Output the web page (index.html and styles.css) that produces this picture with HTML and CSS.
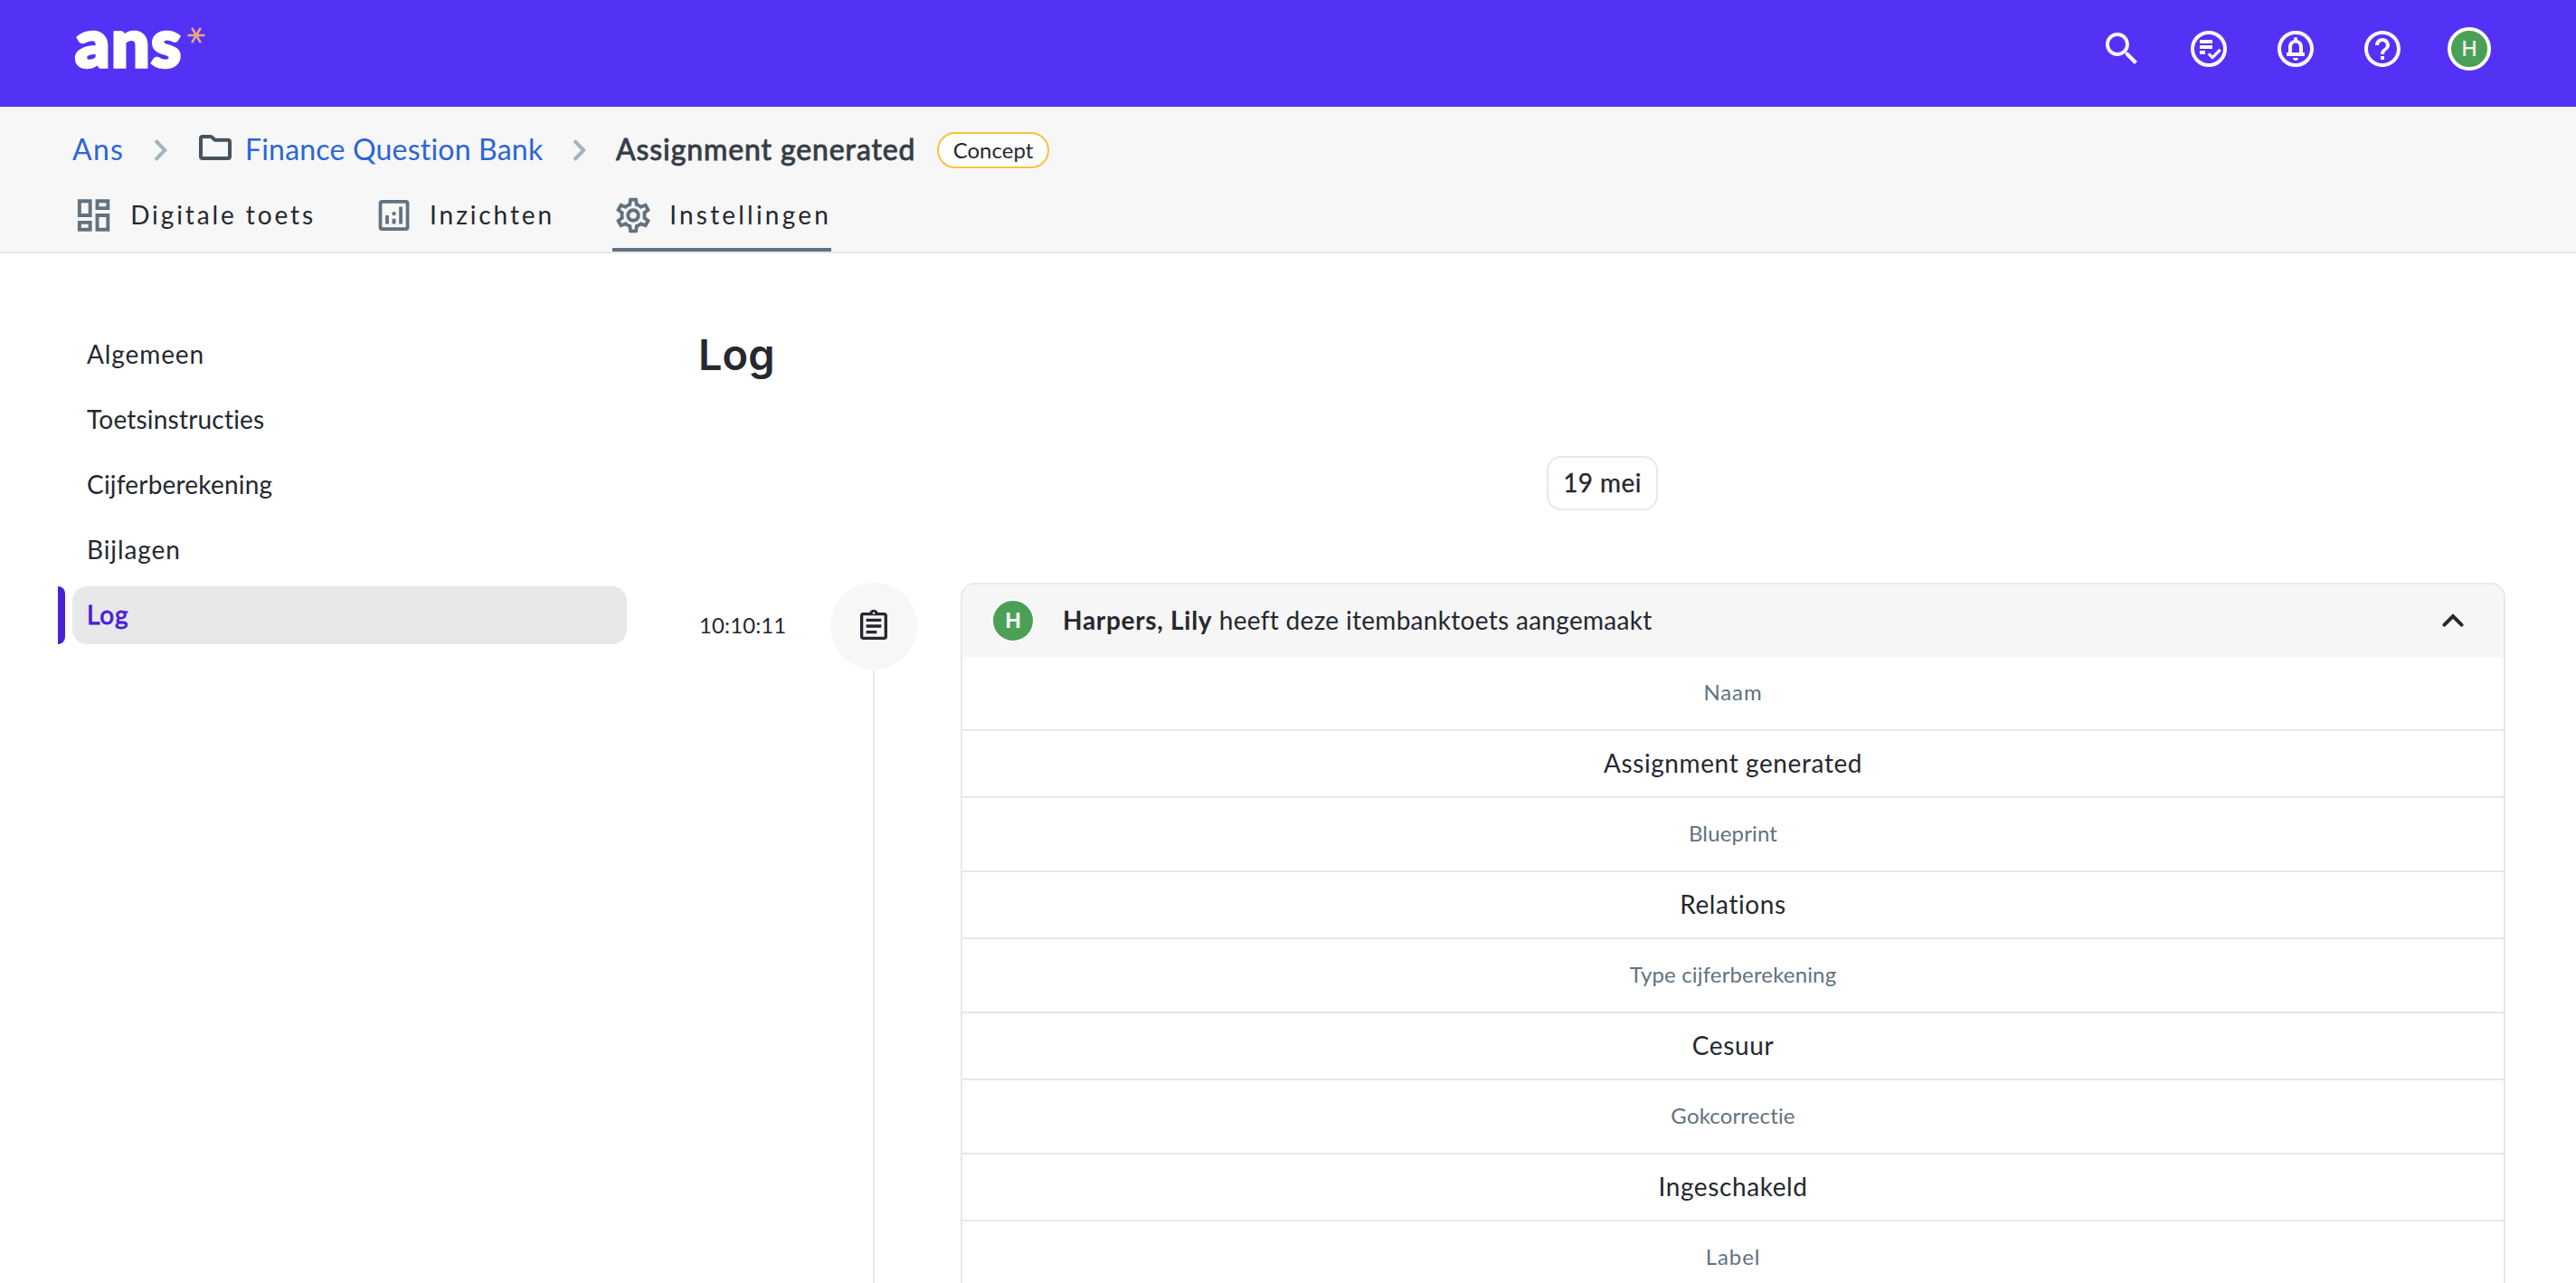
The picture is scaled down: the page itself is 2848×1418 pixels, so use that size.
FILE: index.html
```html
<!DOCTYPE html>
<html lang="nl">
<head>
    <meta charset="UTF-8">
    <meta name="viewport" content="width=device-width, initial-scale=1.0">
    <title>Log - Assignment generated</title>
    <link rel="stylesheet" href="styles.css">
</head>
<body>
    <header class="topbar">
        <a class="logo">
            <span class="logo-text">ans</span>
            <svg class="logo-star" viewBox="0 0 20 20"><path d="M.5 10h19M5.2 1.8l9.6 16.4M14.8 1.8L5.2 18.2"/></svg>
        </a>
        <div class="topbar-icons">
            <svg class="icon" viewBox="0 0 24 24"><path d="M15.5 14h-.79l-.28-.27C15.41 12.59 16 11.11 16 9.5 16 5.91 13.09 3 9.5 3S3 5.91 3 9.5 5.91 16 9.5 16c1.61 0 3.09-.59 4.23-1.57l.27.28v.79l5 4.99L20.49 19l-4.99-5zm-6 0C7.01 14 5 11.99 5 9.5S7.01 5 9.5 5 14 7.01 14 9.5 11.99 14 9.5 14z"/></svg>
            <svg class="icon" viewBox="0 0 24 24">
                <circle class="ring" cx="12" cy="12" r="9"/>
                <path d="M7 7h7v2H7zM7 10h7v2H7zM7 13h3v2H7z"/>
                <path class="check" d="M11.9 14.7l2.15 2.1 4.3-4.3"/>
            </svg>
            <svg class="icon" viewBox="0 0 24 24">
                <circle class="ring" cx="12" cy="12" r="9"/>
                <path d="M12 18.5c.83 0 1.5-.67 1.5-1.5h-3c0 .83.67 1.5 1.5 1.5zM16 14v-3c0-1.95-1.1-3.5-3-3.9V6.5c0-.55-.45-1-1-1s-1 .45-1 1v.6C9.1 7.5 8 9.05 8 11v3H7v2h10v-2h-1zm-2 0h-4v-3c0-1.25.75-2.2 2-2.2s2 .95 2 2.2v3z"/>
            </svg>
            <svg class="icon" viewBox="0 0 24 24"><path d="M11 18h2v-2h-2v2zm1-16C6.48 2 2 6.48 2 12s4.48 10 10 10 10-4.48 10-10S17.52 2 12 2zm0 18c-4.41 0-8-3.59-8-8s3.59-8 8-8 8 3.59 8 8-3.59 8-8 8zm0-14c-2.21 0-4 1.79-4 4h2c0-1.1.9-2 2-2s2 .9 2 2c0 2-3 1.75-3 5h2c0-2.25 3-2.5 3-5 0-2.21-1.79-4-4-4z"/></svg>
            <span class="avatar avatar-top">H</span>
        </div>
    </header>

    <div class="subheader">
        <div class="breadcrumb">
            <a class="crumb crumb-short">Ans</a>
            <svg class="chevron" viewBox="0 0 16 24"><path d="M2 1.4L12.2 12 2 22.6"/></svg>
            <svg class="folder" viewBox="0 0 36 28"><path d="M4 2h8.6q1 0 1.7.7L17 5.3q.5.5 1.3.5H32q2 0 2 2V24q0 2-2 2H4q-2 0-2-2V4q0-2 2-2z"/></svg>
            <a class="crumb">Finance Question Bank</a>
            <svg class="chevron" viewBox="0 0 16 24"><path d="M2 1.4L12.2 12 2 22.6"/></svg>
            <span class="crumb crumb-current">Assignment generated</span>
            <span class="badge">Concept</span>
        </div>
        <nav class="tabs">
            <a class="tab">
                <svg viewBox="0 0 48 48"><path d="M6 6h16v20H6zM10 10v12h8V10zM26 6h16v12H26zM30 10v4h8v-4zM6 30h16v12H6zM10 34v4h8v-4zM26 22h16v20H26zM30 26v12h8V26z"/></svg>
                <span>Digitale toets</span>
            </a>
            <a class="tab">
                <svg viewBox="0 0 48 48"><path d="M10 6h28q4 0 4 4v28q0 4-4 4H10q-4 0-4-4V10q0-4 4-4zM10 10v28h28V10zM14 24v10h4V24zM22 20v4h4v-4zM22 28v6h4v-6zM30 14v20h4V14z"/></svg>
                <span>Inzichten</span>
            </a>
            <a class="tab active">
                <svg viewBox="0 0 24 24"><path d="M19.43 12.98c.04-.32.07-.64.07-.98 0-.34-.03-.66-.07-.98l2.11-1.65c.19-.15.24-.42.12-.64l-2-3.46c-.09-.16-.26-.25-.44-.25-.06 0-.12.01-.17.03l-2.49 1c-.52-.4-1.08-.73-1.69-.98l-.38-2.65C14.46 2.18 14.25 2 14 2h-4c-.25 0-.46.18-.49.42l-.38 2.65c-.61.25-1.17.59-1.69.98l-2.49-1c-.06-.02-.12-.03-.18-.03-.17 0-.34.09-.43.25l-2 3.46c-.13.22-.07.49.12.64l2.11 1.65c-.04.32-.07.65-.07.98 0 .33.03.66.07.98l-2.11 1.65c-.19.15-.24.42-.12.64l2 3.46c.09.16.26.25.44.25.06 0 .12-.01.17-.03l2.49-1c.52.4 1.08.73 1.69.98l.38 2.65c.03.24.24.42.49.42h4c.25 0 .46-.18.49-.42l.38-2.65c.61-.25 1.17-.59 1.69-.98l2.49 1c.06.02.12.03.18.03.17 0 .34-.09.43-.25l2-3.46c.12-.22.07-.49-.12-.64l-2.11-1.65zm-1.98-1.71c.04.31.05.52.05.73 0 .21-.02.43-.05.73l-.14 1.13.89.7 1.08.84-.7 1.21-1.27-.51-1.04-.42-.9.68c-.43.32-.84.56-1.25.73l-1.06.43-.16 1.13-.2 1.35h-1.4l-.19-1.35-.16-1.13-1.06-.43c-.43-.18-.83-.41-1.23-.71l-.91-.7-1.06.43-1.27.51-.7-1.21 1.08-.84.89-.7-.14-1.13c-.03-.31-.05-.54-.05-.74s.02-.43.05-.73l.14-1.13-.89-.7-1.08-.84.7-1.21 1.27.51 1.04.42.9-.68c.43-.32.84-.56 1.25-.73l1.06-.43.16-1.13.2-1.35h1.39l.19 1.35.16 1.13 1.06.43c.43.18.83.41 1.23.71l.91.7 1.06-.43 1.27-.51.7 1.21-1.07.85-.89.7.14 1.13zM12 8c-2.21 0-4 1.79-4 4s1.79 4 4 4 4-1.79 4-4-1.79-4-4-4zm0 6c-1.1 0-2-.9-2-2s.9-2 2-2 2 .9 2 2-.9 2-2 2z"/></svg>
                <span>Instellingen</span>
            </a>
        </nav>
    </div>

    <main class="page">
        <nav class="sidebar">
            <a class="side-item wide">Algemeen</a>
            <a class="side-item">Toetsinstructies</a>
            <a class="side-item">Cijferberekening</a>
            <a class="side-item wide">Bijlagen</a>
            <a class="side-item wide active">Log</a>
        </nav>

        <section class="content">
            <h1>Log</h1>
            <div class="date">19 mei</div>

            <div class="entry">
                <div class="time">10:10:11</div>
                <div class="timeline">
                    <div class="dot">
                        <svg viewBox="0 0 24 24"><path d="M7 15h7v2H7zm0-4h10v2H7zm0-4h10v2H7zm12-4h-4.18C14.4 1.84 13.3 1 12 1c-1.3 0-2.4.84-2.82 2H5c-.14 0-.27.01-.4.04-.39.08-.74.28-1.01.55-.18.18-.33.4-.43.64-.1.23-.16.49-.16.77v14c0 .27.06.54.16.78s.25.45.43.64c.27.27.62.47 1.01.55.13.02.26.03.4.03h14c1.1 0 2-.9 2-2V5c0-1.1-.9-2-2-2zm-7-.25c.41 0 .75.34.75.75s-.34.75-.75.75-.75-.34-.75-.75.34-.75.75-.75zM19 19H5V5h14v14z"/></svg>
                    </div>
                    <div class="line"></div>
                </div>
                <div class="card">
                    <div class="card-header">
                        <span class="avatar avatar-card">H</span>
                        <p><b>Harpers, Lily</b> heeft deze itembanktoets aangemaakt</p>
                        <svg class="collapse" viewBox="0 0 48 48"><path d="M14.4 28.6L24 19l9.6 9.6"/></svg>
                    </div>
                    <div class="label wide">Naam</div>
                    <div class="value">Assignment generated</div>
                    <div class="label">Blueprint</div>
                    <div class="value">Relations</div>
                    <div class="label">Type cijferberekening</div>
                    <div class="value">Cesuur</div>
                    <div class="label">Gokcorrectie</div>
                    <div class="value">Ingeschakeld</div>
                    <div class="label wide">Label</div>
                </div>
            </div>
        </section>
    </main>
</body>
</html>
```
FILE: styles.css
```css
* {
    box-sizing: border-box;
}
body {
    margin: 0;
    height: 100vh;
    overflow: hidden;
    font-family: Lato, "Open Sans", sans-serif;
    font-size: 28px;
    font-variant-ligatures: none;
    color: #25282f;
    background-color: #ffffff;
}
svg {
    display: block;
}

/* Top bar */
.topbar {
    display: flex;
    justify-content: space-between;
    align-items: flex-start;
    height: 118px;
    padding: 0 94px 0 83px;
    background-color: #5432f5;
}
.logo {
    display: flex;
    padding-top: 8px;
}
.logo-text {
    width: 124px;
    font-size: 75px;
    font-weight: 900;
    line-height: 75px;
    letter-spacing: 1.5px;
    color: #ffffff;
    -webkit-text-stroke: 3.5px #ffffff;
}
.logo-star {
    width: 20px;
    height: 20px;
    margin-top: 21px;
    stroke: #eaa77a;
    stroke-width: 2.6;
}
.topbar-icons {
    display: flex;
    gap: 48px;
    padding-top: 30px;
}
.icon {
    width: 48px;
    height: 48px;
    fill: #f7f7f7;
}
.icon .ring {
    fill: none;
    stroke: #f7f7f7;
    stroke-width: 2;
}
.icon .check {
    fill: none;
    stroke: #f7f7f7;
    stroke-width: 1.6;
}
.avatar {
    display: flex;
    justify-content: center;
    align-items: center;
    width: 48px;
    height: 48px;
    border-radius: 50%;
    font-family: Inter, sans-serif;
    font-size: 23px;
    color: #f7f7f7;
    background-color: #4aa155;
}
.avatar-top {
    border: 4px solid #ffffff;
    font-weight: 500;
}
.avatar-card {
    border: 2px solid #ffffff;
    font-weight: 700;
}

/* Breadcrumb and tabs */
.subheader {
    height: 162px;
    padding: 24px 80px 0;
    background-color: #f7f7f7;
    border-bottom: 2px solid #e8e8e8;
}
.breadcrumb {
    display: grid;
    grid-template-columns: 90px 50px 51px 362px 48px 355px auto;
    justify-content: start;
    align-items: center;
    height: 48px;
}
.crumb {
    padding-bottom: 3px;
    font-size: 32px;
    letter-spacing: 0.2px;
    white-space: nowrap;
    color: #2b66d4;
}
.crumb-short {
    letter-spacing: 1.3px;
}
.crumb-current {
    letter-spacing: 0.9px;
    color: #373d45;
    -webkit-text-stroke: 0.9px #373d45;
}
.chevron {
    width: 16px;
    height: 24px;
    fill: none;
    stroke: #a5b3bb;
    stroke-width: 4;
}
.folder {
    width: 36px;
    height: 28px;
    margin-bottom: 6px;
    fill: none;
    stroke: #46525c;
    stroke-width: 4;
}
.badge {
    width: 124px;
    height: 40px;
    border: 2px solid #f8c23d;
    border-radius: 20px;
    font-size: 24px;
    line-height: 35px;
    text-align: center;
    background-color: #ffffff;
}
.tabs {
    display: grid;
    grid-template-columns: 269px 200px 242px;
    gap: 64px;
    padding-top: 8px;
}
.tab {
    display: flex;
    align-items: center;
    gap: 17px;
    height: 80px;
    padding-top: 4px;
    border-bottom: 4px solid transparent;
    letter-spacing: 2.9px;
    white-space: nowrap;
}
.tab svg {
    width: 48px;
    height: 48px;
    fill: #61727f;
    fill-rule: evenodd;
}
.tab span {
    padding-bottom: 3px;
}
.tab.active {
    border-bottom-color: #61727f;
    letter-spacing: 3.2px;
}

/* Page */
.page {
    display: flex;
    gap: 80px;
    padding: 80px 78px 0 80px;
}
.sidebar {
    display: flex;
    flex-direction: column;
    gap: 8px;
    width: 613px;
}
.side-item {
    position: relative;
    height: 64px;
    padding-left: 16px;
    border-radius: 16px;
    line-height: 63px;
    letter-spacing: 0.2px;
}
.side-item.active {
    color: #4920d8;
    background-color: #e8e8e8;
    -webkit-text-stroke: 0.8px #4920d8;
}
.side-item.active::before {
    content: "";
    position: absolute;
    left: -16px;
    top: 0;
    width: 8px;
    height: 64px;
    border-radius: 0 8px 8px 0;
    background-color: #4920d8;
}
.wide,
.side-item.wide {
    letter-spacing: 0.9px;
}
.content {
    flex: 1;
}
h1 {
    height: 64px;
    margin: 0 0 0 -1px;
    font-family: Inter, sans-serif;
    font-size: 47px;
    font-weight: 600;
    line-height: 63px;
}
.date {
    width: 123px;
    height: 60px;
    margin: 80px auto;
    border: 2px solid #e8e8e8;
    border-radius: 16px;
    line-height: 54px;
    letter-spacing: 0.4px;
    text-align: center;
    -webkit-text-stroke: 0.3px #25282f;
}

/* Log entry */
.entry {
    display: flex;
}
.time {
    width: 145px;
    font-size: 24px;
    line-height: 94px;
    letter-spacing: 0.1px;
}
.timeline {
    display: flex;
    flex-direction: column;
    align-items: center;
    width: 96px;
    margin-right: 48px;
}
.dot {
    display: flex;
    justify-content: center;
    align-items: center;
    width: 96px;
    height: 96px;
    border-radius: 50%;
    background-color: #f7f7f7;
}
.dot svg {
    width: 40px;
    height: 40px;
    fill: #25282f;
}
.line {
    flex: 1;
    width: 2px;
    background-color: #e8e8e8;
}
.card {
    flex: 1;
    border: 2px solid #e8e8e8;
    border-radius: 16px;
    overflow: hidden;
}
.card-header {
    display: flex;
    align-items: center;
    height: 80px;
    padding: 0 32px;
    background-color: #f6f6f6;
}
.card-header p {
    flex: 1;
    margin: 0 0 2px 31px;
    letter-spacing: 0.3px;
}
.card-header b {
    letter-spacing: 0.7px;
}
.collapse {
    width: 48px;
    height: 48px;
    fill: none;
    stroke: #25282f;
    stroke-width: 4;
    stroke-linecap: round;
}
.label,
.value {
    border-bottom: 2px solid #e8e8e8;
    text-align: center;
}
.label {
    height: 82px;
    font-size: 24px;
    line-height: 78px;
    letter-spacing: 0.15px;
    color: #61727f;
}
.label.wide {
    letter-spacing: 0.9px;
}
.value {
    height: 74px;
    line-height: 70px;
    letter-spacing: 0.6px;
}
```
